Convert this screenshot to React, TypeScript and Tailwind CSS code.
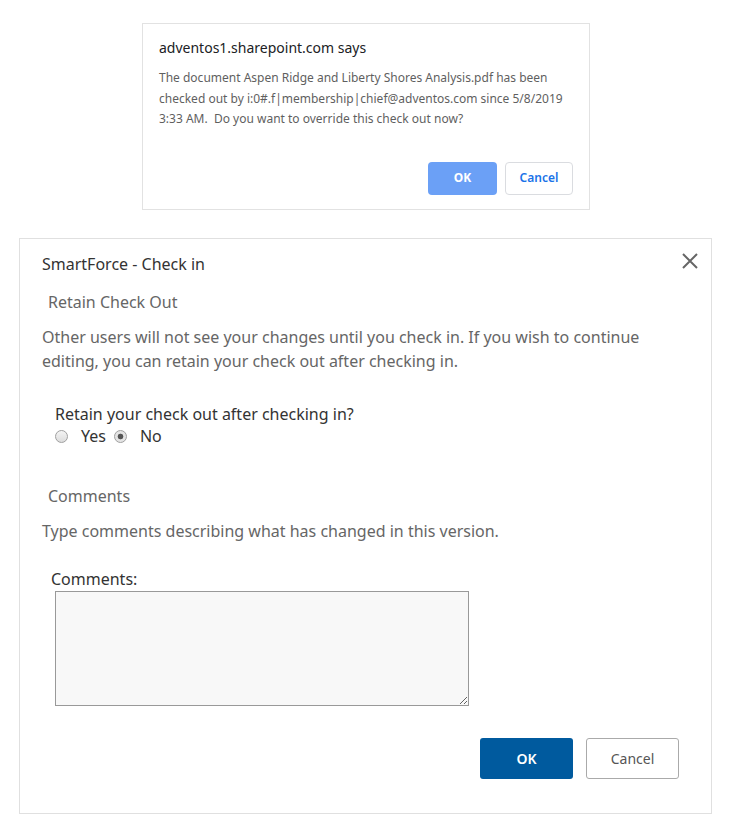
import React from "react";

const radioCls =
  "appearance-none w-[13px] h-[13px] m-0 mr-[13px] rounded-full border border-[#a0a0a0] bg-[linear-gradient(#f4f4f4,#dcdcdc)] checked:bg-[radial-gradient(circle,#555_0,#555_2.5px,#e4e4e4_3.2px)]";

export default function App() {
  return (
    <div className="w-[729px] h-[830px] bg-white relative" style={{ fontFamily: '"Noto Sans", "Open Sans", sans-serif' }}>
      <div className="pt-[23px] pl-[142px]">
        <div className="w-[448px] h-[187px] border border-[#e2e2e2] bg-white px-[16px] pt-[14px]">
          <div className="text-[14px] text-[#202124] leading-[20px]">adventos1.sharepoint.com says</div>
          <div className="mt-[10px] text-[12px] leading-[20.5px] text-[#5f5f5f]">
            The document Aspen Ridge and Liberty Shores Analysis.pdf has been checked out by i:0#.f|membership|chief@adventos.com since 5/8/2019 3:33 AM.&nbsp; Do you want to override this check out now?
          </div>
          <div className="flex justify-end gap-[8px] mt-[32px]">
            <button className="w-[69px] h-[33px] rounded-[4px] bg-[#6ba0f6] text-white text-[12px] font-bold">OK</button>
            <button className="w-[68px] h-[33px] rounded-[4px] border border-[#dadce0] bg-white text-[#1a73e8] text-[12px] font-semibold">Cancel</button>
          </div>
        </div>
      </div>
      <div className="mt-[28px] ml-[19px] w-[693px] h-[576px] border border-[#e0e0e0] bg-white relative px-[22px]">
        <button className="absolute right-[11px] top-[12px] text-[#666]">
          <svg width="20" height="20" viewBox="0 0 20 20" stroke="currentColor" strokeWidth="2" fill="none">
            <path d="M3 3 L17 17 M17 3 L3 17" />
          </svg>
        </button>
        <div className="pt-[13px] text-[16px] leading-[24px] text-[#333]">SmartForce - Check in</div>
        <div className="mt-[14px] pl-[6px] text-[16px] leading-[24px] text-[#666]">Retain Check Out</div>
        <div className="mt-[11px] text-[16px] leading-[24px] text-[#666] pr-[40px]">
          Other users will not see your changes until you check in. If you wish to continue editing, you can retain your check out after checking in.
        </div>
        <div className="mt-[30px] pl-[13px]">
          <div className="text-[16px] leading-[22px] text-[#333]">Retain your check out after checking in?</div>
          <div className="flex items-center text-[16px] leading-[22px] text-[#333]">
            <input type="radio" name="retain" className={radioCls} />
            <span className="mr-[8px]">Yes</span>
            <input type="radio" name="retain" defaultChecked className={radioCls} />
            <span>No</span>
          </div>
        </div>
        <div className="mt-[37px] pl-[6px] text-[16px] leading-[24px] text-[#666]">Comments</div>
        <div className="mt-[11px] text-[16px] leading-[24px] text-[#666]">Type comments describing what has changed in this version.</div>
        <div className="mt-[26px] pl-[9px] text-[16px] leading-[20px] text-[#333]">Comments:</div>
        <div className="pl-[13px] mt-[2px]">
          <textarea className="block w-[414px] h-[115px] border border-[#999] bg-[#f8f8f8] outline-none" />
        </div>
        <div className="flex justify-end gap-[13px] mt-[32px] pr-[10px]">
          <button className="w-[93px] h-[41px] rounded-[3px] bg-[#005a9e] text-white text-[14px] font-semibold">OK</button>
          <button className="w-[93px] h-[41px] rounded-[3px] border border-[#aaa] bg-white text-[#555] text-[14px]">Cancel</button>
        </div>
      </div>
    </div>
  );
}
